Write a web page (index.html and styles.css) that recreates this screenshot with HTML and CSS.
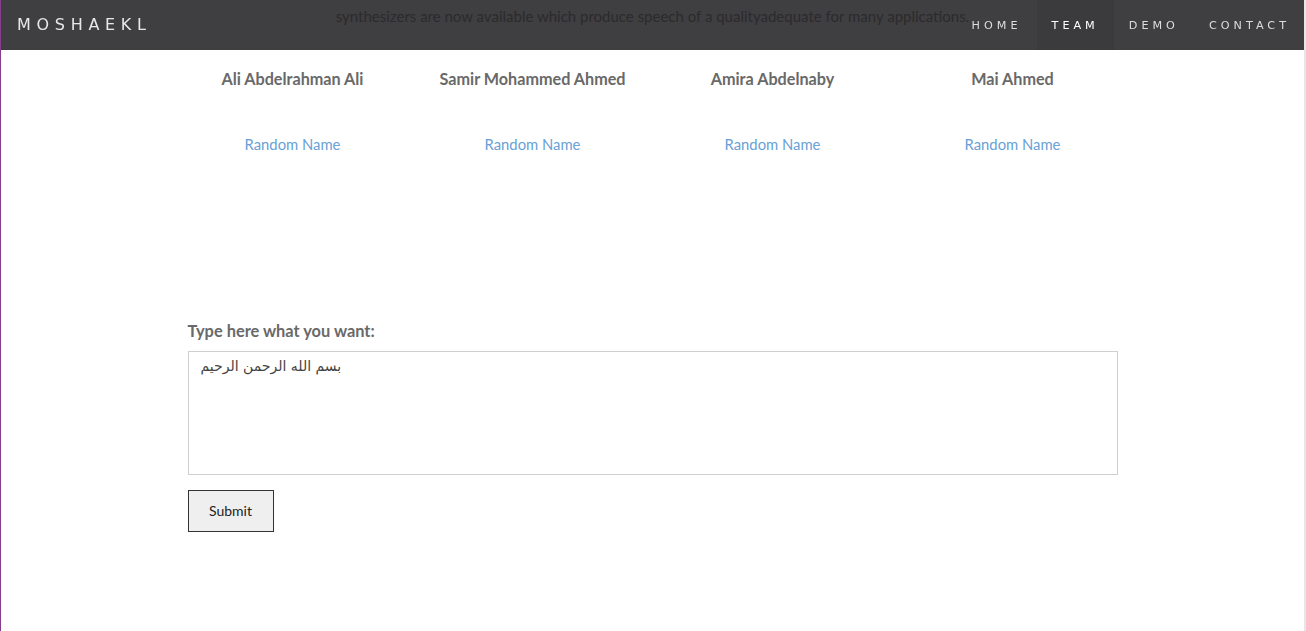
FILE: index.html
```html
<!DOCTYPE html>
<html lang="en">
<head>
<meta charset="utf-8">
<title>Moshaekl</title>
<link rel="stylesheet" href="styles.css">
</head>
<body>
<div class="frame">
  <nav class="navbar">
    <a class="brand" href="#">MOSHAEKL</a>
    <ul class="nav">
      <li><a href="#">HOME</a></li>
      <li class="active"><a href="#">TEAM</a></li>
      <li><a href="#">DEMO</a></li>
      <li><a href="#">CONTACT</a></li>
    </ul>
  </nav>
  <main class="page">
    <p class="intro">synthesizers are now available which produce speech of a qualityadequate for many applications.</p>
    <section class="container team">
      <div class="member"><h3>Ali Abdelrahman Ali</h3><a href="#">Random Name</a></div>
      <div class="member"><h3>Samir Mohammed Ahmed</h3><a href="#">Random Name</a></div>
      <div class="member"><h3>Amira Abdelnaby</h3><a href="#">Random Name</a></div>
      <div class="member"><h3>Mai Ahmed</h3><a href="#">Random Name</a></div>
    </section>
    <form class="container form">
      <label for="txt">Type here what you want:</label>
      <textarea id="txt">بسم الله الرحمن الرحيم</textarea>
      <button type="button" class="submit">Submit</button>
    </form>
  </main>
</div>
</body>
</html>
```
FILE: styles.css
```css
html, body {
  margin: 0;
  padding: 0;
  height: 100%;
  background: #fff;
}
body {
  font-family: Lato, "Noto Sans", sans-serif;
  color: #333;
}
.frame {
  min-height: 100%;
  border-left: 1px solid #883d8c;
  border-right: 2px solid #e6e6e6;
  box-sizing: border-box;
  position: relative;
}
.navbar {
  position: fixed;
  top: 0;
  left: 1px;
  right: 2px;
  height: 50px;
  background: rgba(42, 41, 43, 0.9);
  display: flex;
  align-items: center;
  justify-content: space-between;
  z-index: 10;
}
.brand {
  color: #e8e8e8;
  text-decoration: none;
  font-family: "DejaVu Sans", Lato, sans-serif;
  font-size: 16px;
  letter-spacing: 5.7px;
  margin-left: 16px;
  line-height: 50px;
}
.nav {
  list-style: none;
  margin: 0;
  padding: 0;
  display: flex;
  height: 50px;
}
.nav li a {
  display: block;
  padding: 1px 15px 0 15px;
  line-height: 49px;
  font-family: "DejaVu Sans", Lato, sans-serif;
  font-size: 11.2px;
  letter-spacing: 4px;
  color: #ddd;
  text-decoration: none;
}
.nav li:last-child a {
  padding-right: 14px;
}
.nav li.active a {
  background: rgba(0, 0, 0, 0.07);
  color: #fff;
}
.page {
  padding-top: 5px;
}
.intro {
  margin: 0;
  text-align: center;
  font-size: 15px;
  line-height: 22px;
  color: #333;
}
.container {
  width: 930px;
  margin: 0 auto;
}
.team {
  width: 960px;
  margin-top: 41px;
  display: grid;
  grid-template-columns: repeat(4, 1fr);
  text-align: center;
}
.member h3 {
  margin: 0 0 43px;
  font-size: 16.2px;
  line-height: 22px;
  font-weight: 700;
  color: #696969;
}
.member a {
  display: block;
  font-size: 14.8px;
  line-height: 22px;
  color: #67a1d6;
  text-decoration: none;
}
.form {
  margin-top: 165px;
  display: flex;
  flex-direction: column;
  align-items: flex-start;
}
.form label {
  font-size: 16.4px;
  line-height: 22px;
  font-weight: 700;
  color: #696969;
  margin-bottom: 9px;
}
.form textarea {
  width: 100%;
  height: 124px;
  box-sizing: border-box;
  border: 1px solid #cfcfcf;
  padding: 4px 12px;
  font-family: "DejaVu Sans", sans-serif;
  font-size: 14px;
  line-height: 20px;
  color: #444;
  resize: none;
  outline: none;
}
.submit {
  margin-top: 15px;
  width: 86px;
  height: 42px;
  padding: 0 0 2px;
  background: #efefef;
  border: 1px solid #333;
  border-radius: 0;
  font-family: Lato, sans-serif;
  font-size: 14px;
  color: #222;
}
```
